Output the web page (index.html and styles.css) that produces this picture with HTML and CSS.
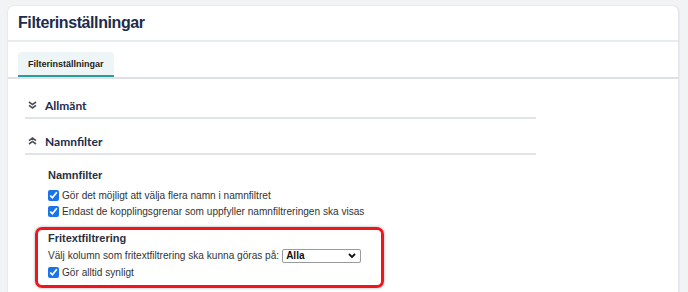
FILE: index.html
```html
<!DOCTYPE html>
<html lang="sv">
<head>
  <meta charset="UTF-8" />
  <title>Filterinställningar</title>
  <link rel="stylesheet" href="styles.css">
</head>
<body>
  <div class="card">
    <div class="card-header">
      <h1>Filterinställningar</h1>
    </div>

    <div class="tabs">
      <a class="tab active">Filterinställningar</a>
    </div>

    <div class="content">
      <div class="acc-head">
        <svg class="chev" width="9" height="8" viewBox="0 0 9 8">
          <path d="M1 1l3.5 2.6L8 1M1 4.4l3.5 2.6L8 4.4" fill="none" stroke="#4a4f57" stroke-width="1.6"/>
        </svg>
        <span>Allmänt</span>
      </div>

      <div class="acc-head">
        <svg class="chev" width="9" height="8" viewBox="0 0 9 8">
          <path d="M1 3.6L4.5 1L8 3.6M1 7L4.5 4.4L8 7" fill="none" stroke="#4a4f57" stroke-width="1.6"/>
        </svg>
        <span>Namnfilter</span>
      </div>

      <div class="acc-body">
        <h3>Namnfilter</h3>
        <label class="check"><input type="checkbox" checked> Gör det möjligt att välja flera namn i namnfiltret</label>
        <label class="check"><input type="checkbox" checked> Endast de kopplingsgrenar som uppfyller namnfiltreringen ska visas</label>

        <div class="highlight">
          <h3>Fritextfiltrering</h3>
          <div class="row">
            Välj kolumn som fritextfiltrering ska kunna göras på:
            <span class="select-wrap">
              <select>
                <option>Alla</option>
              </select>
              <svg class="select-arrow" width="8" height="6" viewBox="0 0 8 6">
                <path d="M1 1l3 3 3-3" fill="none" stroke="#111" stroke-width="1.8"/>
              </svg>
            </span>
          </div>
          <label class="check"><input type="checkbox" checked> Gör alltid synligt</label>
        </div>
      </div>
    </div>
  </div>
</body>
</html>
```

FILE: styles.css
```css
* {
  box-sizing: border-box;
}
body {
  margin: 0;
  padding: 6px 9px 0 8px;
  background: #f2f3f5;
  font-family: "Liberation Sans", Arial, sans-serif;
  color: #333;
  height: 292px;
  overflow: hidden;
}

.card {
  background: #fff;
  border-radius: 6px;
  box-shadow: 0 0 2px rgba(0, 0, 0, 0.12);
  border-right: 1px solid #e2e4e8;
  height: 300px;
}

/* Rubrik */
.card-header {
  height: 36px;
  padding: 0 10px;
  border-bottom: 2px solid #e8ebef;
  display: flex;
  align-items: center;
}
h1 {
  margin: 0;
  font-family: "Liberation Sans", Arial, sans-serif;
  font-size: 16px;
  letter-spacing: -0.4px;
  font-weight: 700;
  color: #1c2c4c;
}

/* Flikar */
.tabs {
  padding: 10px 10px 0;
  border-bottom: 2px solid #dde1e6;
  display: flex;
}
.tab {
  display: block;
  padding: 0 10px;
  height: 25px;
  line-height: 24px;
  font-size: 9px;
  font-weight: 700;
  color: #222;
  background: #edf5f6;
  border-bottom: 2px solid #2b9c98;
  border-radius: 3px 3px 0 0;
}

/* Innehåll */
.content {
  padding: 14px 0 0 17px;
  width: 528px;
}
.acc-head {
  display: flex;
  align-items: center;
  gap: 8px;
  height: 24px;
  padding: 0 0 0 3px;
  border-bottom: 2px solid #e1e5ea;
  font-family: Lato, "Liberation Sans", sans-serif;
  font-weight: 700;
  font-size: 12px;
  color: #1c2c4c;
  box-sizing: content-box;
  padding-bottom: 0;
}
.acc-head + .acc-head {
  margin-top: 10px;
}
.chev {
  display: block;
}

.acc-body {
  padding: 12px 0 0 23px;
}
h3 {
  margin: 0;
  font-size: 11px;
  line-height: 16px;
  font-weight: 700;
  color: #2a3140;
}
.acc-body > h3 {
  margin-bottom: 4px;
}
.check {
  display: flex;
  align-items: center;
  height: 16px;
  font-size: 10.1px;
  color: #333;
  gap: 3px;
}
.check input {
  margin: 0;
  width: 11px;
  height: 11px;
  accent-color: #1a73e8;
}

.highlight {
  margin: 8px 0 0 -13px;
  width: 349px;
  padding: 0 10px 5px 10px;
  border: 3px solid #f0141c;
  border-radius: 7px;
  box-shadow: 0 0 3px rgba(0, 0, 0, 0.35);
}
.highlight h3 {
  line-height: 17px;
}
.row {
  display: flex;
  align-items: center;
  gap: 3px;
  height: 17px;
  font-size: 10.1px;
  color: #333;
}
.select-wrap {
  position: relative;
  display: block;
}
select {
  appearance: none;
  display: block;
  width: 79px;
  height: 14px;
  margin: 0;
  padding: 0 0 0 3px;
  border: 1px solid #9a9a9a;
  border-radius: 2px;
  background: #fff;
  font-family: "Liberation Sans", Arial, sans-serif;
  font-size: 10px;
  font-weight: 700;
  color: #111;
  line-height: 12px;
}
.select-arrow {
  position: absolute;
  right: 5px;
  top: 4px;
}
```
